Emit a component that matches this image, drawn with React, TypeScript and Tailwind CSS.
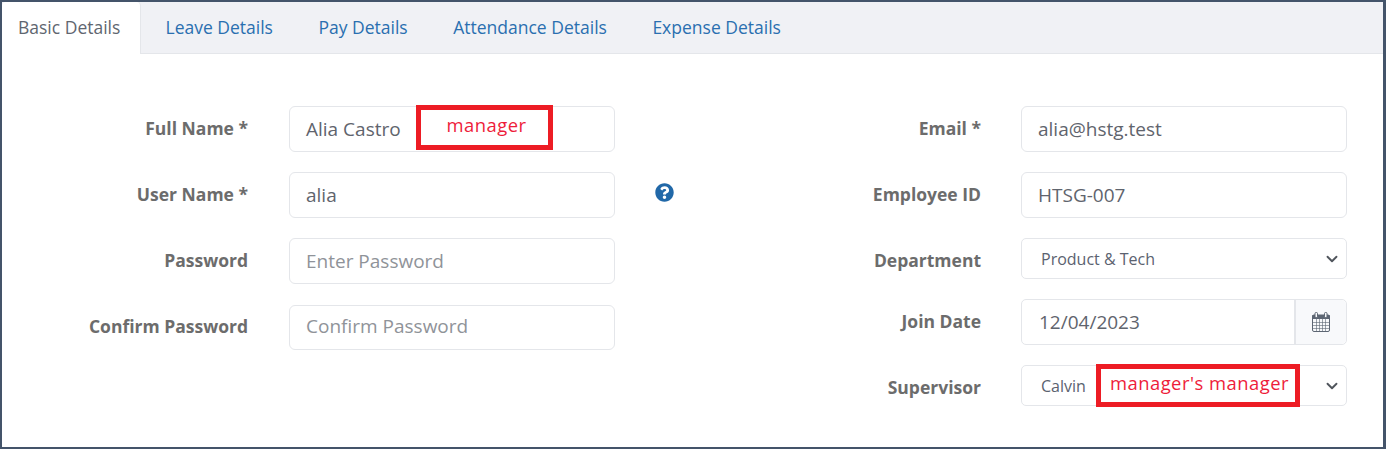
import { ChevronDown } from 'lucide-react'
import { FaQuestionCircle } from 'react-icons/fa'

const tabs = ['Leave Details', 'Pay Details', 'Attendance Details', 'Expense Details']

function Label({ text, className }: { text: string; className: string }) {
  return <label className={`shrink-0 text-right text-[17.5px] font-bold text-[#6c6c6c] ${className}`}>{text}</label>
}

function TextInput({ value, placeholder, className }: { value?: string; placeholder?: string; className: string }) {
  return (
    <div className={`flex h-[46px] w-[326px] shrink-0 items-center rounded-[6px] border border-[#e4e6ea] bg-white px-4 text-[19px] ${className}`}>
      {value ? <span className="text-[#5f646d]">{value}</span> : <span className="text-[#8f9399]">{placeholder}</span>}
    </div>
  )
}

function SelectBox({ value }: { value: string }) {
  return (
    <div className="ml-[40px] flex h-[41px] w-[326px] shrink-0 items-center justify-between rounded-[5px] border border-[#e4e6ea] bg-white pl-[19px] pr-[5px] text-[16px] text-[#5b6270]">
      <span>{value}</span>
      <ChevronDown size={18} strokeWidth={2.5} className="text-[#50555c]" />
    </div>
  )
}

function CalendarIcon() {
  return (
    <svg width="18" height="20" viewBox="0 0 18 20" className="text-[#5d6673]">
      <rect x="0.5" y="3" width="17" height="16.5" rx="1.5" fill="none" stroke="currentColor" />
      <rect x="0" y="3" width="18" height="4" rx="1" fill="currentColor" />
      <rect x="3" y="0.5" width="2.5" height="5" rx="1" fill="#f8f9fb" stroke="currentColor" />
      <rect x="12.5" y="0.5" width="2.5" height="5" rx="1" fill="#f8f9fb" stroke="currentColor" />
      <path d="M1 10.5h16M1 13.5h16M1 16.5h16M4.5 7v12M7.5 7v12M10.5 7v12M13.5 7v12" stroke="currentColor" strokeWidth="0.6" fill="none" />
    </svg>
  )
}

export default function App() {
  return (
    <div className="relative h-[449px] w-[1386px] border-2 border-r-[3px] border-[#44546a] bg-white font-['Open_Sans',sans-serif]">
      {/* Tabs */}
      <div className="flex h-[52px] items-stretch border-b border-[#e4e6ea] bg-[#f0f1f5] text-[17.5px]">
        <div className="-mb-px flex w-[139px] items-center rounded-t-[4px] border-r border-[#e4e6ea] bg-white pb-[1px] pl-4 text-[#5f6670]">
          Basic Details
        </div>
        <div className="flex items-center gap-[45.5px] pb-[1px] pl-[24.5px] text-[#2a6fb0]">
          {tabs.map((t) => (
            <span key={t}>{t}</span>
          ))}
        </div>
      </div>

      {/* Form */}
      <div className="flex pt-[52px]">
        <div className="flex w-[715px] shrink-0 flex-col gap-5">
          <div className="flex items-center">
            <Label text="Full Name *" className="-mt-[2px] w-[246px]" />
            <TextInput value="Alia Castro" className="ml-[41px]" />
          </div>
          <div className="flex items-center">
            <Label text="User Name *" className="-mt-[2px] w-[246px]" />
            <TextInput value="alia" className="ml-[41px]" />
            <FaQuestionCircle size={19} className="ml-[40px] -mt-[6px] shrink-0 text-[#2168a8]" />
          </div>
          <div className="flex items-center">
            <Label text="Password" className="-mt-[2px] w-[246px]" />
            <TextInput placeholder="Enter Password" className="ml-[41px]" />
          </div>
          <div className="mt-px flex items-center">
            <Label text="Confirm Password" className="-mt-[3px] w-[246px]" />
            <TextInput placeholder="Confirm Password" className="ml-[41px] !h-[45px] pb-[2px]" />
          </div>
        </div>

        <div className="flex flex-col gap-5">
          <div className="flex items-center">
            <Label text="Email *" className="-mt-[2px] w-[264px]" />
            <TextInput value="alia@hstg.test" className="ml-[40px]" />
          </div>
          <div className="flex items-center">
            <Label text="Employee ID" className="-mt-[2px] w-[264px]" />
            <TextInput value="HTSG-007" className="ml-[40px]" />
          </div>
          <div className="flex items-center">
            <Label text="Department" className="mt-[4px] w-[264px]" />
            <SelectBox value="Product & Tech" />
          </div>
          <div className="flex items-center">
            <Label text="Join Date" className="-mt-[2px] w-[264px]" />
            <div className="ml-[40px] flex h-[46px] w-[326px] shrink-0 rounded-[5px] border border-[#e4e6ea] bg-white text-[19px] text-[#5f646d]">
              <div className="flex flex-1 items-center pl-[17px]">12/04/2023</div>
              <div className="flex w-[52px] items-center justify-center rounded-r-[5px] border-l-2 border-[#e4e6ea] bg-[#f8f9fb]">
                <CalendarIcon />
              </div>
            </div>
          </div>
          <div className="flex items-center">
            <Label text="Supervisor" className="mt-[4px] w-[264px]" />
            <SelectBox value="Calvin" />
          </div>
        </div>
      </div>

      {/* Red annotations */}
      <div className="absolute left-[414px] top-[103px] flex h-[45px] w-[137px] items-center justify-center border-[5px] border-[#ed1c24] pb-[5px] pl-[4px] text-[18.4px] tracking-[0.5px] text-[#ee1c3a]">
        manager
      </div>
      <div className="absolute left-[1094px] top-[362px] flex h-[43px] w-[204px] items-center justify-center border-[5px] border-[#ed1c24] pb-[5px] pl-[3px] text-[18.4px] tracking-[0.5px] whitespace-nowrap bg-white text-[#ee1c3a]">
        manager's manager
      </div>
    </div>
  )
}
